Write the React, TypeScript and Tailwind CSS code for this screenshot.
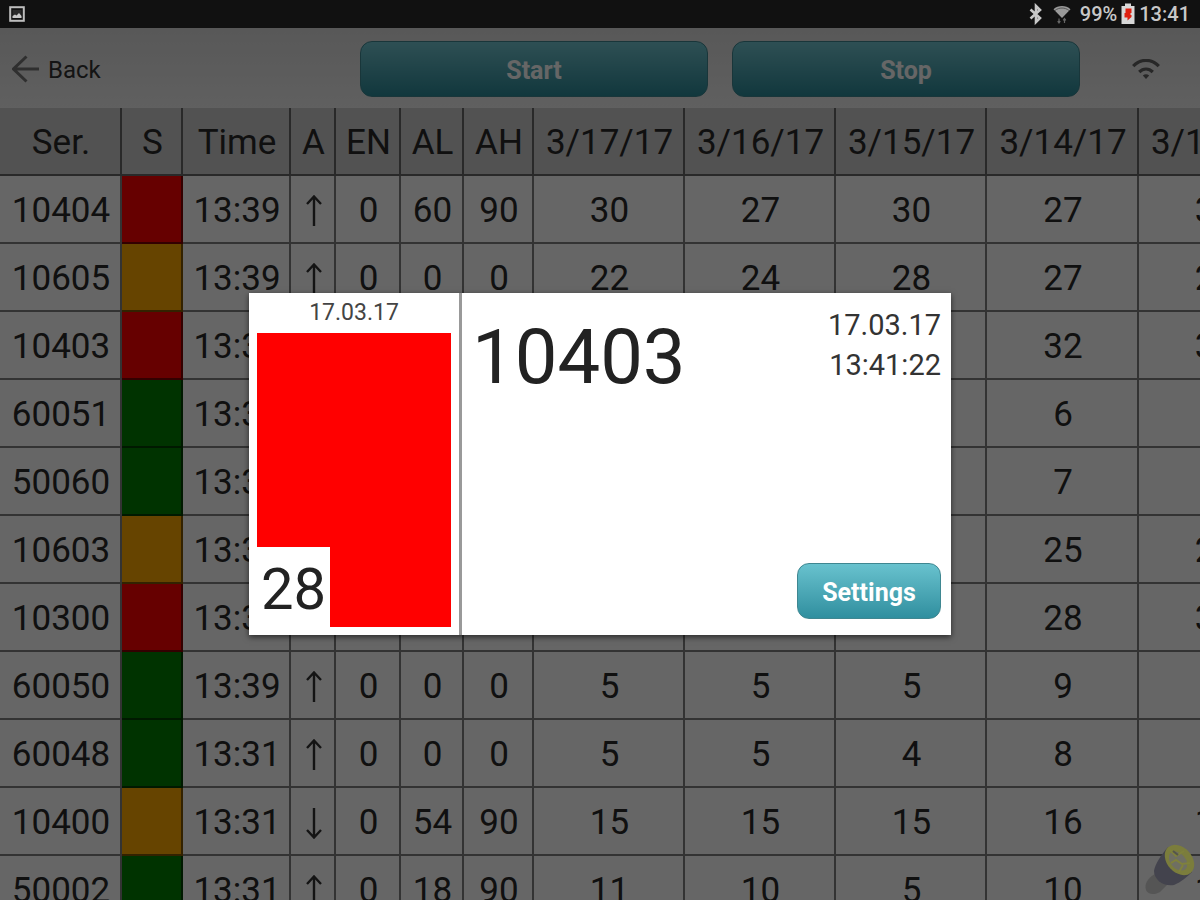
import React from "react";

type Status = "red" | "orange" | "green";

interface Reading {
  serial: string;
  status: Status;
  time: string;
  trend: "up" | "down";
  en: number;
  al: number;
  ah: number;
  days: number[];
}

const statusClass: Record<Status, string> = {
  red: "bg-[#ff0000]",
  orange: "bg-[#ffaa00]",
  green: "bg-[#008000]",
};

const columns = [
  { title: "Ser.", width: "w-[122px]" },
  { title: "S", width: "w-[61px]" },
  { title: "Time", width: "w-[108px]" },
  { title: "A", width: "w-[45px]" },
  { title: "EN", width: "w-[65px]" },
  { title: "AL", width: "w-[63px]" },
  { title: "AH", width: "w-[70px]" },
  { title: "3/17/17", width: "w-[151px]" },
  { title: "3/16/17", width: "w-[151px]" },
  { title: "3/15/17", width: "w-[151px]" },
  { title: "3/14/17", width: "w-[152px]" },
  { title: "3/13/17", width: "w-[151px]" },
];

const readings: Reading[] = [
  { serial: "10404", status: "red", time: "13:39", trend: "up", en: 0, al: 60, ah: 90, days: [30, 27, 30, 27, 30] },
  { serial: "10605", status: "orange", time: "13:39", trend: "up", en: 0, al: 0, ah: 0, days: [22, 24, 28, 27, 27] },
  { serial: "10403", status: "red", time: "13:39", trend: "up", en: 0, al: 60, ah: 90, days: [28, 30, 31, 32, 30] },
  { serial: "60051", status: "green", time: "13:39", trend: "up", en: 0, al: 0, ah: 0, days: [5, 5, 5, 6, 6] },
  { serial: "50060", status: "green", time: "13:39", trend: "up", en: 0, al: 0, ah: 0, days: [6, 6, 6, 7, 7] },
  { serial: "10603", status: "orange", time: "13:39", trend: "up", en: 0, al: 0, ah: 0, days: [22, 24, 25, 25, 25] },
  { serial: "10300", status: "red", time: "13:39", trend: "up", en: 0, al: 60, ah: 90, days: [28, 28, 28, 28, 30] },
  { serial: "60050", status: "green", time: "13:39", trend: "up", en: 0, al: 0, ah: 0, days: [5, 5, 5, 9, 8] },
  { serial: "60048", status: "green", time: "13:31", trend: "up", en: 0, al: 0, ah: 0, days: [5, 5, 4, 8, 8] },
  { serial: "10400", status: "orange", time: "13:31", trend: "down", en: 0, al: 54, ah: 90, days: [15, 15, 15, 16, 15] },
  { serial: "50002", status: "green", time: "13:31", trend: "up", en: 0, al: 18, ah: 90, days: [11, 10, 5, 10, 10] },
];

function StatusBar() {
  return (
    <div className="flex h-7 shrink-0 items-center justify-between bg-[#111111] pr-[10px] pl-2 text-[#c8c8c8]">
      <svg width="18" height="18" viewBox="0 0 18 18" aria-hidden="true">
        <rect x="2.2" y="2.2" width="13.6" height="13.6" fill="none" stroke="#bdbdbd" strokeWidth="2" />
        <rect x="4.5" y="5" width="9" height="8" fill="#2a2a2a" />
        <path d="M4.5 13v-2l2.5-1.5 1.5 1 2.5-2.5 2.5 3v2z" fill="#c8c8c8" />
      </svg>
      <div className="flex items-center">
        <svg width="16" height="22" viewBox="0 0 16 22" aria-hidden="true">
          <path d="M2.500 6.500l9.500 8.500-4 4V3l4 4-9.500 8.500" fill="none" stroke="currentColor" strokeWidth="2.600" />
        </svg>
        <svg className="ml-2" width="20" height="22" viewBox="0 0 20 22" aria-hidden="true">
          <path d="M1.500 6.200C6 1.800 14 1.800 18.500 6.200L10 15z" fill="#9a9a9a" />
          <path d="M3 7.500C7 4.200 13 4.200 17 7.500" fill="none" stroke="#555" strokeWidth="1" />
          <path d="M7 15.500v4.500M5.700 18.200L7 20l1.300-1.800M12.500 20v-4.500M11.200 17.300l1.300-1.800 1.300 1.800" fill="none" stroke="#666" strokeWidth="1.200" />
        </svg>
        <span className="ml-2 text-[20px] leading-7 font-medium">99%</span>
        <svg className="mx-1" width="14" height="22" viewBox="0 0 14 22" aria-hidden="true">
          <path d="M4 0.500h6v2.500h3.500v18H0.500V3H4z" fill="#d8d8d8" />
          <path d="M4.500 5.500h6V10h-1v2h1v2l-4 3.500v-3h-3V10h1z" fill="#e02010" />
        </svg>
        <span className="text-[20px] leading-7 font-medium">13:41</span>
      </div>
    </div>
  );
}

function Toolbar() {
  const button =
    "h-14 rounded-xl border border-[#3f8791] bg-gradient-to-b from-[#72c6d1] to-[#2b8b99] pt-1 text-[25px] leading-7 font-bold text-white";

  return (
    <header className="flex h-20 shrink-0 items-center bg-gradient-to-b from-[#dcdcdc] to-[#efefef] pt-px">
      <div className="w-[30%] pl-3">
        <button type="button" className="flex items-center gap-2 text-[24px] leading-7 text-[#333333]">
          <svg width="28" height="28" viewBox="0 0 28 28" aria-hidden="true">
            <path d="M27 14H2M14.500 1.500L1.500 14l13 12.500" fill="none" stroke="#777777" strokeWidth="3" />
          </svg>
          <span className="pt-0.5">Back</span>
        </button>
      </div>
      <div className="grid flex-1 grid-cols-2 gap-6">
        <button type="button" className={button}>
          Start
        </button>
        <button type="button" className={button}>
          Stop
        </button>
      </div>
      <div className="flex w-[10%] justify-center pl-3">
        <svg width="28" height="20" viewBox="0 0 28 20" aria-hidden="true">
          <path d="M1.200 7.200C8.500 -0.600 19.500 -0.600 26.800 7.200M7.200 13c4-4 9.600-4 13.600 0" fill="none" stroke="#626262" strokeWidth="3.200" />
          <path d="M14 20l-3.200-3.600c1.800-1.700 4.600-1.700 6.400 0z" fill="#626262" />
        </svg>
      </div>
    </header>
  );
}

function TrendArrow({ direction }: { direction: "up" | "down" }) {
  return (
    <svg
      className={direction === "up" ? "mx-auto" : "mx-auto rotate-180"}
      width="18"
      height="32"
      viewBox="0 0 18 32"
      role="img"
      aria-label={direction}
    >
      <path d="M9 31V2M2 9L9 1.500l7 7.500" fill="none" stroke="#333333" strokeWidth="2.400" />
    </svg>
  );
}

function ReadingsTable() {
  const cell = "h-[68px] border-r-2 border-b-2 border-black/50 p-0 pt-1 pl-0.5";

  return (
    <table className="w-max table-fixed border-separate border-spacing-0 text-center text-[35px] leading-10 text-[#2a2a2a]">
      <thead>
        <tr className="bg-[#cccccc]">
          {columns.map((column) => (
            <th key={column.title} className={`${cell} ${column.width} font-normal`}>
              {column.title}
            </th>
          ))}
        </tr>
      </thead>
      <tbody>
        {readings.map((row) => (
          <tr key={row.serial}>
            <td className={cell}>{row.serial}</td>
            <td className={`${cell} ${statusClass[row.status]}`} />
            <td className={cell}>{row.time}</td>
            <td className={cell}>
              <TrendArrow direction={row.trend} />
            </td>
            <td className={cell}>{row.en}</td>
            <td className={cell}>{row.al}</td>
            <td className={cell}>{row.ah}</td>
            {row.days.map((value, index) => (
              <td key={index} className={cell}>
                {value}
              </td>
            ))}
          </tr>
        ))}
      </tbody>
    </table>
  );
}

function DeviceDialog() {
  return (
    <div
      role="dialog"
      aria-label="10403"
      className="flex w-full max-w-[702px] bg-white text-[#222222] shadow-[0_2px_6px_rgba(0,0,0,0.6)]"
    >
      {/* Level preview */}
      <div className="w-[213px] shrink-0 border-r-3 border-[#999999] px-2 pb-2">
        <p className="text-center text-[23px] leading-10 text-[#444444]">17.03.17</p>
        <div className="flex h-[294px] items-end bg-[#ff0000]">
          <span className="bg-white pt-2 pr-1 pb-1 pl-1 text-[58px] leading-[68px]">28</span>
        </div>
      </div>

      {/* Details */}
      <div className="flex flex-1 flex-col justify-between pt-3 pr-[10px] pb-4 pl-[10px]">
        <div className="flex justify-between">
          <h1 className="pt-3 text-[76px] leading-[80px]">10403</h1>
          <div className="text-right text-[29px] leading-10 text-[#333333]">
            <p>17.03.17</p>
            <p>13:41:22</p>
          </div>
        </div>
        <button
          type="button"
          className="h-14 w-36 self-end rounded-xl border border-[#3f8791] bg-gradient-to-b from-[#68c2ce] to-[#2f8f9f] pt-1 text-[25px] leading-7 font-bold text-white"
        >
          Settings
        </button>
      </div>
    </div>
  );
}

function SensorBadge() {
  return (
    <svg className="absolute right-0 bottom-0" width="64" height="64" viewBox="0 0 64 64" aria-hidden="true">
      <path d="M19 38C12 42 8 48 10 54c2 5 9 5 14 2l8-8z" fill="#555555" />
      <path d="M32 11C25 19 19 28 18 35c0 9 10 16 20 14 7-3 13-8 18-13z" fill="#43434d" />
      <ellipse cx="43.5" cy="24" rx="17" ry="12.500" transform="rotate(48 43.5 24)" fill="#7b7d3c" />
      <ellipse cx="42" cy="25" rx="11" ry="7.500" transform="rotate(48 42 25)" fill="#6f6f62" />
      <path d="M34 14l6 6 8-5M35 27l5-3 6 4 8-1M43 36l4-7" fill="none" stroke="#7f813c" strokeWidth="2" />
      <path d="M37 15l5 4" stroke="#55564a" strokeWidth="2" />
    </svg>
  );
}

export default function App() {
  return (
    <div className="flex h-screen flex-col overflow-hidden bg-white font-[Roboto,sans-serif]">
      <StatusBar />
      <div className="relative flex min-h-0 flex-1 flex-col overflow-hidden">
        <Toolbar />
        <main className="min-h-0 flex-1 overflow-hidden">
          <ReadingsTable />
        </main>
        <div className="absolute inset-0 flex items-center justify-center bg-black/60">
          <DeviceDialog />
          <SensorBadge />
        </div>
      </div>
    </div>
  );
}
